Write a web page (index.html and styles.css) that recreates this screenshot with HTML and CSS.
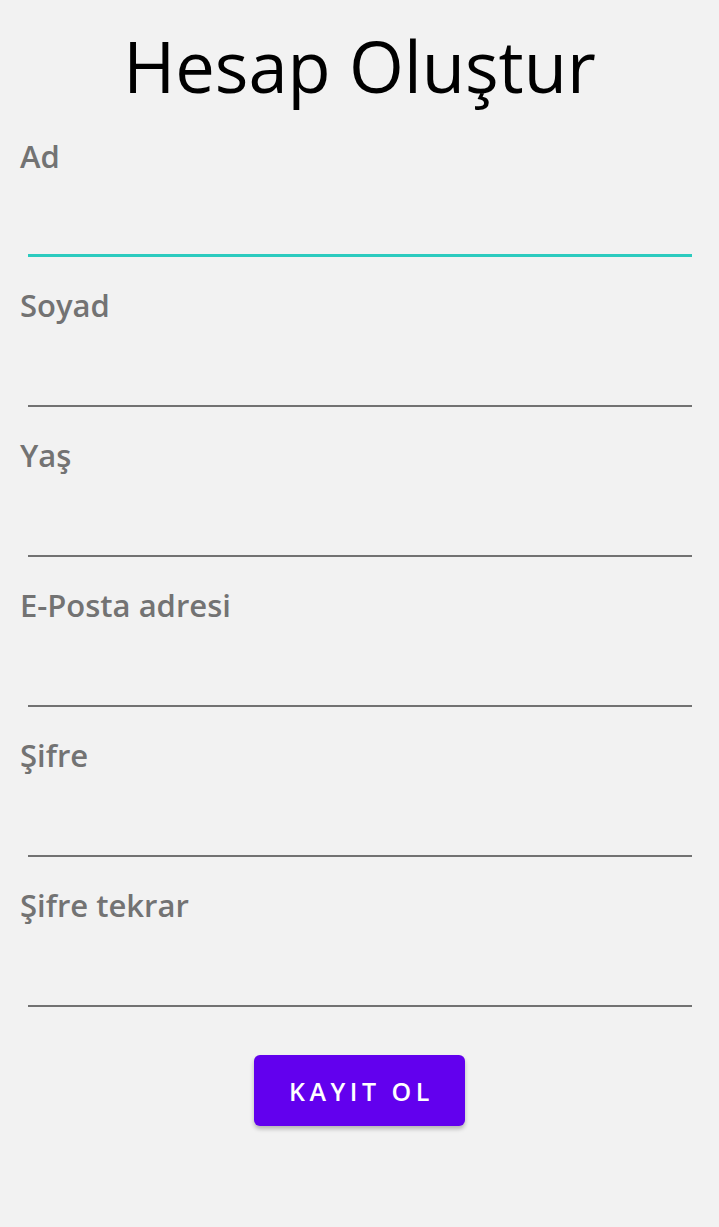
FILE: index.html
```html
<!DOCTYPE html>
<html lang="tr">
<head>
<meta charset="utf-8">
<title>Hesap Oluştur</title>
<link rel="stylesheet" href="styles.css">
</head>
<body>
<main class="page">
  <h1 class="title">Hesap Oluştur</h1>
  <form class="form">
    <div class="field field-first">
      <label class="label">Ad</label>
      <div class="input input-focused"></div>
    </div>
    <div class="field">
      <label class="label">Soyad</label>
      <div class="input"></div>
    </div>
    <div class="field">
      <label class="label">Yaş</label>
      <div class="input"></div>
    </div>
    <div class="field">
      <label class="label">E-Posta adresi</label>
      <div class="input"></div>
    </div>
    <div class="field">
      <label class="label">Şifre</label>
      <div class="input"></div>
    </div>
    <div class="field">
      <label class="label">Şifre tekrar</label>
      <div class="input"></div>
    </div>
    <div class="actions">
      <button type="button" class="button">KAYIT OL</button>
    </div>
  </form>
</main>
</body>
</html>
```
FILE: styles.css
```css
html, body {
  margin: 0;
  padding: 0;
  background: #f2f2f2;
}
body {
  width: 719px;
  height: 1227px;
  font-family: "Open Sans", Lato, sans-serif;
  overflow: hidden;
}
.page {
  display: flex;
  flex-direction: column;
}
.title {
  margin: 0;
  height: 108px;
  padding-top: 31px;
  box-sizing: border-box;
  font-size: 70.5px;
  line-height: 70px;
  font-weight: 400;
  color: #000;
  text-align: center;
}
.form {
  display: flex;
  flex-direction: column;
}
.field {
  height: 150px;
  margin: 0 27px 0 28px;
  display: flex;
  flex-direction: column;
  box-sizing: border-box;
  padding-top: 28px;
}
.field-first {
  height: 149px;
}
.label {
  margin-left: -8px;
  font-size: 31px;
  line-height: 40px;
  font-weight: 600;
  color: #737373;
}
.input {
  flex: 1;
  border-bottom: 2px solid #727272;
}
.input-focused {
  border-bottom: 3px solid #2ccbbf;
}
.actions {
  display: flex;
  justify-content: center;
  padding-top: 48px;
}
.button {
  width: 211px;
  height: 71px;
  padding: 0 0 0 4px;
  border: none;
  border-radius: 6px;
  background: #6200ee;
  color: #fff;
  font-family: "Open Sans", Lato, sans-serif;
  font-size: 25px;
  font-weight: 600;
  letter-spacing: 4.5px;
  box-shadow: 0 3px 4px rgba(0, 0, 0, 0.25);
}
```
